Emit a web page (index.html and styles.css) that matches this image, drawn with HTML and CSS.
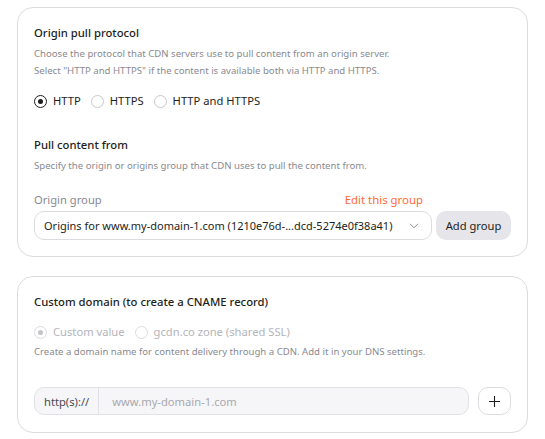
FILE: index.html
```html
<!DOCTYPE html>
<html lang="en">
<head>
    <meta charset="UTF-8">
    <meta name="viewport" content="width=device-width, initial-scale=1.0">
    <title>CDN resource settings</title>
    <link rel="stylesheet" href="styles.css">
</head>
<body>
    <div class="page">
        <div class="card">
            <h3>Origin pull protocol</h3>
            <p class="hint">Choose the protocol that CDN servers use to pull content from an origin server.<br>Select "HTTP and HTTPS" if the content is available both via HTTP and HTTPS.</p>
            <div class="radios">
                <label class="radio"><span class="dot checked"></span>HTTP</label>
                <label class="radio"><span class="dot"></span>HTTPS</label>
                <label class="radio"><span class="dot"></span>HTTP and HTTPS</label>
            </div>

            <h3 class="section">Pull content from</h3>
            <p class="hint">Specify the origin or origins group that CDN uses to pull the content from.</p>
            <div class="field-head">
                <span class="field-label">Origin group</span>
                <a href="#" class="edit-link">Edit this group</a>
            </div>
            <div class="select-row">
                <div class="select">
                    <span class="select-value">Origins for www.my-domain-1.com (1210e76d-...dcd-5274e0f38a41)</span>
                    <svg width="10" height="6" viewBox="0 0 10 6"><path d="M1 0.8l4 4 4-4" fill="none" stroke="#8e8e94" stroke-width="1"/></svg>
                </div>
                <button class="btn-grey">Add group</button>
            </div>
        </div>

        <div class="card">
            <h3>Custom domain (to create a CNAME record)</h3>
            <div class="radios disabled">
                <label class="radio"><span class="dot checked"></span>Custom value</label>
                <label class="radio"><span class="dot"></span>gcdn.co zone (shared SSL)</label>
            </div>
            <p class="hint tight">Create a domain name for content delivery through a CDN. Add it in your DNS settings.</p>
            <div class="domain-row">
                <div class="input-group">
                    <span class="prefix">http(s)://</span>
                    <input type="text" placeholder="www.my-domain-1.com">
                </div>
                <button class="btn-plus">
                    <svg width="11" height="11" viewBox="0 0 11 11"><path d="M5.5 0v11M0 5.5h11" stroke="#1e1e20" stroke-width="1.1"/></svg>
                </button>
            </div>
        </div>
    </div>
</body>
</html>
```

FILE: styles.css
```css
body {
    margin: 0;
    font-family: "Noto Sans", Arial, sans-serif;
    background: #fff;
    color: #1e1e20;
}
.page {
    padding: 7px 17px;
    display: flex;
    flex-direction: column;
    gap: 19px;
}
.card {
    border: 1px solid #dcdce0;
    border-radius: 16px;
    padding: 17px 16px 16px;
}
.card + .card {
    padding-bottom: 17px;
}
h3 {
    margin: 0;
    font-size: 11.3px;
    font-weight: 500;
    line-height: 16px;
}
h3.section {
    margin-top: 28px;
}
.hint {
    margin: 4px 0 0;
    font-size: 9.6px;
    line-height: 17px;
    color: #8a8a90;
}
.hint.tight {
    margin-top: 3px;
}
.radios {
    display: flex;
    gap: 10px;
    margin-top: 14px;
    font-size: 11.2px;
    line-height: 16px;
}
.radio {
    display: flex;
    align-items: center;
    gap: 6px;
}
.dot {
    width: 11px;
    height: 11px;
    border: 1px solid #c9c9ce;
    border-radius: 50%;
    position: relative;
}
.dot.checked {
    border-color: #1e1e20;
}
.dot.checked::after {
    content: "";
    position: absolute;
    left: 3px;
    top: 3px;
    width: 5px;
    height: 5px;
    border-radius: 50%;
    background: #1e1e20;
}
.radios.disabled {
    color: #b4b4ba;
}
.radios.disabled .dot {
    border-color: #dcdce0;
}
.radios.disabled .dot.checked::after {
    background: #c4c4c9;
}
.field-head {
    display: flex;
    justify-content: space-between;
    margin-top: 18px;
    padding-right: 88px;
    line-height: 16px;
}
.field-label {
    font-size: 11.2px;
    color: #8a8a90;
}
.edit-link {
    font-size: 11.4px;
    color: #ff6b33;
    text-decoration: none;
}
.select-row {
    display: flex;
    gap: 4px;
    margin-top: 3px;
}
.select {
    flex: 1;
    height: 29px;
    border: 1px solid #dcdce0;
    border-radius: 10px;
    box-sizing: border-box;
    padding: 0 12px 0 9px;
    display: flex;
    align-items: center;
    justify-content: space-between;
    font-size: 11px;
}
.select-value {
    white-space: nowrap;
}
.btn-grey {
    width: 75px;
    height: 29px;
    border: none;
    border-radius: 10px;
    background: #e6e5ea;
    padding: 0;
    font-family: inherit;
    font-size: 11.2px;
    color: #1e1e20;
}
.domain-row {
    display: flex;
    gap: 9px;
    margin-top: 27px;
}
.input-group {
    flex: 1;
    height: 28px;
    display: flex;
    border: 1px solid #e2e2e6;
    border-radius: 10px;
    background: #f6f6f8;
    box-sizing: border-box;
    overflow: hidden;
}
.prefix {
    display: flex;
    align-items: center;
    padding: 0 9px;
    font-size: 11.2px;
    color: #4a4a50;
    border-right: 1px solid #e2e2e6;
}
.input-group input {
    flex: 1;
    border: none;
    background: transparent;
    padding: 0 13px;
    font-family: inherit;
    font-size: 11.2px;
    color: #1e1e20;
    outline: none;
}
.input-group input::placeholder {
    color: #a8a8ae;
}
.btn-plus {
    width: 33px;
    height: 28px;
    border: 1px solid #dcdce0;
    border-radius: 10px;
    background: #fff;
    padding: 0;
    display: flex;
    align-items: center;
    justify-content: center;
}
```
